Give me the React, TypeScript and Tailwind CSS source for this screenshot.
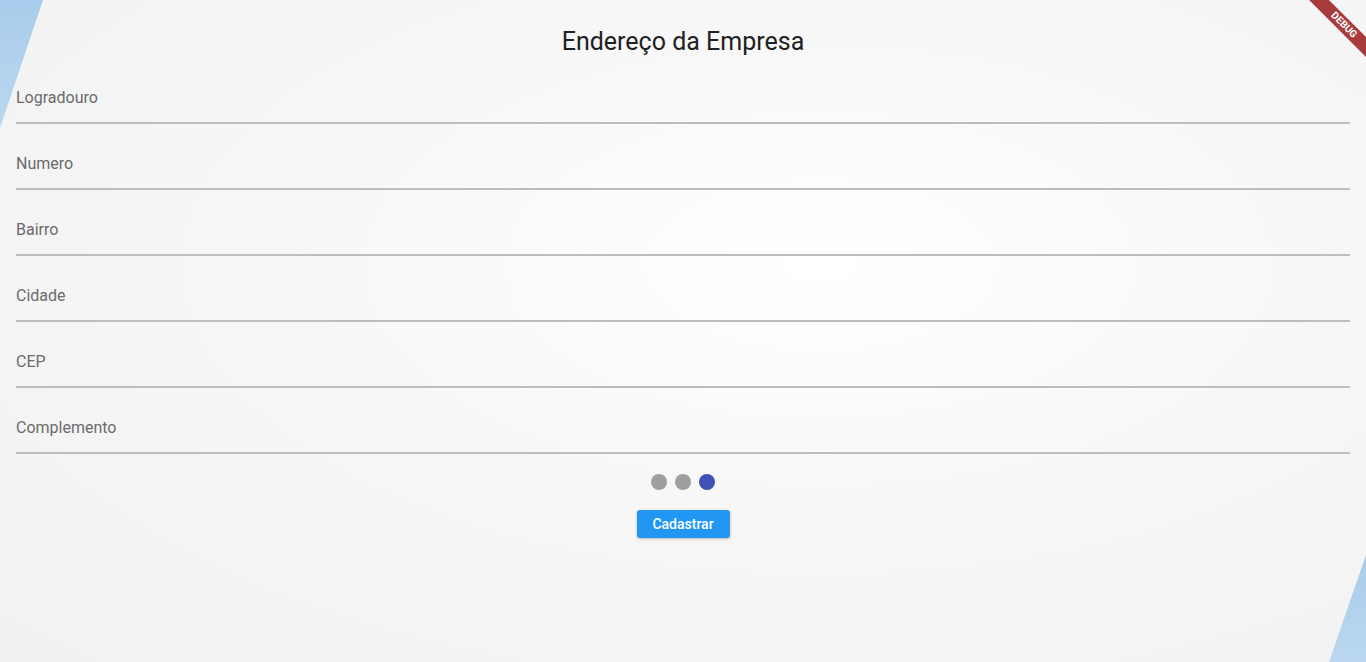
// Company address form screen

const fields = ["Logradouro", "Numero", "Bairro", "Cidade", "CEP", "Complemento"];

const Field = ({ label }: { label: string }) => {
    return (
        <div className="flex flex-col pt-[29px]">
            <span className="text-[16px] leading-[22px] text-[#6b6b6b]">{label}</span>
            <div className="mt-[13px] h-[2px] bg-[#bdbdbd]" />
        </div>
    );
};

const App = () => {
    return (
        <div
            className="relative h-[662px] w-[1366px] overflow-hidden bg-[radial-gradient(ellipse_at_60%_40%,#ffffff_0%,#f7f7f7_45%,#f1f1f1_100%)]"
            style={{ fontFamily: "Roboto, 'Noto Sans', sans-serif" }}
        >
            {/* background wedges */}
            <svg className="absolute inset-0" width="1366" height="662" viewBox="0 0 1366 662">
                <defs>
                    <linearGradient id="wedge" x1="0" y1="0" x2="0" y2="1">
                        <stop offset="0" stopColor="#a9cdec" />
                        <stop offset="1" stopColor="#bad7ef" />
                    </linearGradient>
                </defs>
                <polygon points="0,0 43,0 0,128" fill="url(#wedge)" />
                <polygon points="1366,555 1366,662 1329,662" fill="url(#wedge)" />
            </svg>

            <div className="relative flex flex-col px-4">
                <h1 className="pt-[26px] text-center text-[25px] leading-8 text-[#212121]">
                    Endereço da Empresa
                </h1>

                {fields.map((f) => (
                    <Field key={f} label={f} />
                ))}

                {/* page indicator */}
                <div className="mt-5 flex justify-center gap-2">
                    <span className="h-4 w-4 rounded-full bg-[#9e9e9e]" />
                    <span className="h-4 w-4 rounded-full bg-[#9e9e9e]" />
                    <span className="h-4 w-4 rounded-full bg-[#3f51b5]" />
                </div>

                <div className="mt-5 flex justify-center">
                    <button className="h-7 w-[93px] rounded-[3px] bg-[#2196f3] text-[14px] font-medium text-white shadow-[0_1px_3px_rgba(0,0,0,0.25)]">
                        Cadastrar
                    </button>
                </div>
            </div>

            {/* debug banner */}
            <div className="absolute left-[1284px] top-[18px] flex h-[14px] w-[120px] rotate-45 items-center justify-center bg-[#a83c3c] text-[10px] font-bold leading-none text-white">
                DEBUG
            </div>
        </div>
    );
};

export default App;
